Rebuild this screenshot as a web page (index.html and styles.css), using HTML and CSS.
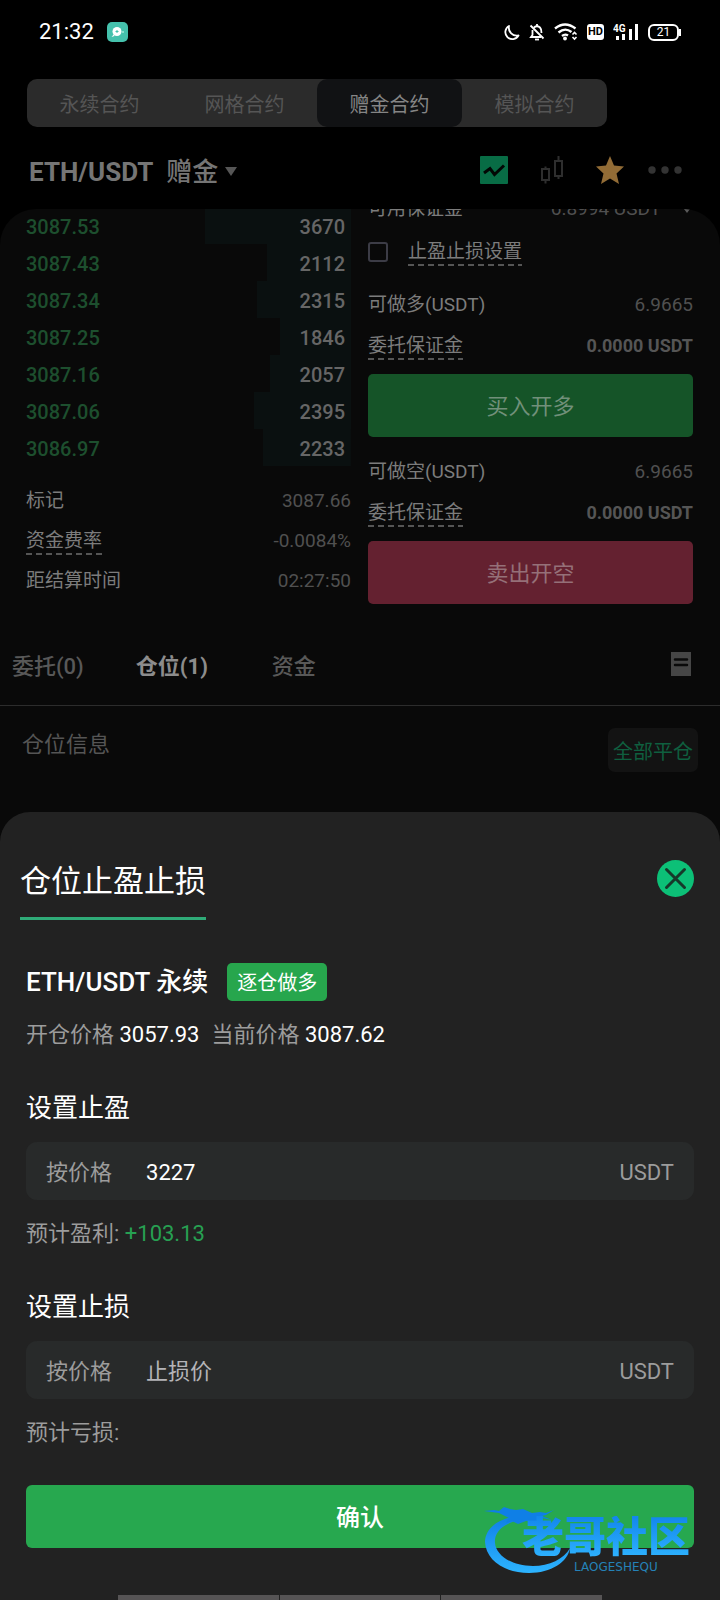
FILE: index.html
```html
<!DOCTYPE html>
<html lang="zh-CN">
<head>
  <meta charset="UTF-8" />
  <meta name="viewport" content="width=device-width, initial-scale=1.0" />
  <title>ETH/USDT 赠金合约</title>
  <link rel="stylesheet" href="styles.css">
</head>
<body>
  <div class="status-bar">
    <span class="clock">21:32</span>
    <svg class="app-badge" width="21" height="20" viewBox="0 0 21 20">
      <rect width="21" height="20" rx="5" fill="#45c1ac"/>
      <circle cx="10" cy="9.5" r="4.5" fill="#fff"/>
      <path d="M7 12l-2.500 3 3-1z" fill="#fff"/>
      <circle cx="16" cy="10" r="1" fill="#a5e8da"/>
      <path d="M10 8v3M8.500 9.500h3" stroke="#45c1ac" stroke-width="1"/>
    </svg>
    <div class="status-icons">
      <svg width="16" height="18" viewBox="0 0 16 18" fill="none" stroke="#fff" stroke-width="1.800" stroke-linejoin="round">
        <path d="M5 3A7 7 0 1 0 14.500 12.500A8 8 0 0 1 5 3z"/>
      </svg>
      <svg width="16" height="18" viewBox="0 0 16 18" fill="none" stroke="#fff" stroke-width="1.800">
        <path d="M5 4.500Q8 2 11 4.500Q12.500 6 12.500 10M3.500 7V12L2 14H12M8 1v2M1.500 2.500L14.500 15.500"/>
        <path d="M6 16.500h4"/>
      </svg>
      <svg width="24" height="18" viewBox="0 0 24 18" fill="none" stroke="#fff" stroke-width="2.400">
        <path d="M1 5.500Q11 -2.500 21.500 5.500M4.500 9.500Q11 4 17.500 9"/>
        <path d="M8 13Q11 10.500 14 12.500"/>
        <circle cx="11" cy="15.500" r="1.900" fill="#fff" stroke="none"/>
        <path d="M18.500 11.500L20.500 9.500L22.500 11.500M18.500 14L20.500 16L22.500 14" stroke-width="1.600"/>
      </svg>
      <span class="hd">HD</span>
      <svg class="signal" width="26" height="18" viewBox="0 0 26 18" fill="#fff">
        <text x="0" y="9" font-size="10" font-weight="700">4G</text>
        <path d="M3 13h3v4H3zM9 11h3v6H9zM16 6h3v11h-3zM22 1h3v16h-3z"/>
      </svg>
      <span class="battery">21</span>
    </div>
  </div>

  <nav class="segment">
    <button>永续合约</button>
    <button>网格合约</button>
    <button class="active">赠金合约</button>
    <button>模拟合约</button>
  </nav>

  <header class="pair-bar">
    <button class="pair-select">
      <span class="pair-name">ETH/USDT</span>
      <span>赠金</span>
      <svg width="12" height="9" viewBox="0 0 12 9"><path d="M0 0h12L6 9z" fill="#565656"/></svg>
    </button>
    <div class="pair-tools">
      <button aria-label="走势">
        <svg width="28" height="28" viewBox="0 0 28 28">
          <rect width="28" height="28" rx="1" fill="#086c45"/>
          <path d="M4 17L10 12.500L14.500 18.500L24 9.500" fill="none" stroke="#020604" stroke-width="3"/>
        </svg>
      </button>
      <button aria-label="K线">
        <svg width="24" height="28" viewBox="0 0 24 28" fill="none" stroke="#2e2e2e" stroke-width="2">
          <path d="M2 13h7v11H2zM5.500 10.500V13M5.500 24v3.500M15 5h7v15h-7zM18.500 0v5M18.500 20v3"/>
        </svg>
      </button>
      <button aria-label="收藏">
        <svg width="28" height="28" viewBox="0 0 28 28">
          <path d="M14 0L18 9.500L28 10.500L20.500 17.500L23 28L14 22.500L5 28L7.500 17.500L0 10.500L10 9.500z" fill="#926c36"/>
        </svg>
      </button>
      <button aria-label="更多">
        <svg width="34" height="28" viewBox="0 0 34 28" fill="#333">
          <circle cx="4" cy="14" r="3.700"/><circle cx="17" cy="14" r="3.700"/><circle cx="30" cy="14" r="3.700"/>
        </svg>
      </button>
    </div>
  </header>

  <main class="panel">
    <div class="trade">
      <section class="market">
        <div class="book">
          <div class="book-row" style="background-size: 45% 100%"><span>3087.53</span><span>3670</span></div>
          <div class="book-row" style="background-size: 26% 100%"><span>3087.43</span><span>2112</span></div>
          <div class="book-row" style="background-size: 29% 100%"><span>3087.34</span><span>2315</span></div>
          <div class="book-row" style="background-size: 22% 100%"><span>3087.25</span><span>1846</span></div>
          <div class="book-row" style="background-size: 25% 100%"><span>3087.16</span><span>2057</span></div>
          <div class="book-row" style="background-size: 30% 100%"><span>3087.06</span><span>2395</span></div>
          <div class="book-row" style="background-size: 27% 100%"><span>3086.97</span><span>2233</span></div>
        </div>
        <div class="row"><span>标记</span><span class="value">3087.66</span></div>
        <div class="row"><span class="hint">资金费率</span><span class="value">-0.0084%</span></div>
        <div class="row"><span>距结算时间</span><span class="value">02:27:50</span></div>
      </section>

      <section class="order">
        <div class="row available">
          <span>可用保证金</span>
          <span class="value">6.8994 USDT
            <svg width="12" height="8" viewBox="0 0 12 8"><path d="M0 0h12L6 8z" fill="#5a5a5a"/></svg>
          </span>
        </div>
        <label class="tpsl">
          <input type="checkbox">
          <span class="hint">止盈止损设置</span>
        </label>
        <div class="row"><span>可做多(USDT)</span><span class="value">6.9665</span></div>
        <div class="row margin"><span class="hint">委托保证金</span><strong>0.0000 USDT</strong></div>
        <button class="trade-btn buy">买入开多</button>
        <div class="row"><span>可做空(USDT)</span><span class="value">6.9665</span></div>
        <div class="row margin"><span class="hint">委托保证金</span><strong>0.0000 USDT</strong></div>
        <button class="trade-btn sell">卖出开空</button>
      </section>
    </div>

    <nav class="tabs">
      <button>委托(0)</button>
      <button class="active">仓位(1)</button>
      <button>资金</button>
      <button class="history" aria-label="历史">
        <svg width="20" height="24" viewBox="0 0 20 24">
          <rect width="20" height="24" fill="#464646"/>
          <path d="M4 7.500h12M4 13h12" stroke="#0a0a0a" stroke-width="2.500" stroke-linecap="round"/>
        </svg>
      </button>
    </nav>

    <div class="positions">
      <span>仓位信息</span>
      <button class="close-all">全部平仓</button>
    </div>
  </main>

  <form class="sheet">
    <div class="sheet-head">
      <h2>仓位止盈止损</h2>
      <button type="button" class="close" aria-label="关闭">
        <svg width="37" height="37" viewBox="0 0 37 37">
          <circle cx="18.500" cy="18.500" r="18.500" fill="#0cc077"/>
          <path d="M9.500 9.500L27.500 27.500M27.500 9.500L9.500 27.500" stroke="#16392a" stroke-width="3" stroke-linecap="round"/>
        </svg>
      </button>
    </div>

    <div class="sheet-body">
      <div class="position-name">
        <h3>ETH/USDT 永续</h3>
        <span class="side">逐仓做多</span>
      </div>
      <div class="prices">
        <span>开仓价格 <b>3057.93</b></span>
        <span>当前价格 <b>3087.62</b></span>
      </div>

      <h4>设置止盈</h4>
      <div class="field">
        <label for="takeProfit">按价格</label>
        <input id="takeProfit" type="text" inputmode="decimal" value="3227">
        <span>USDT</span>
      </div>
      <p class="estimate">预计盈利: <span class="profit">+103.13</span></p>

      <h4>设置止损</h4>
      <div class="field">
        <label for="stopLoss">按价格</label>
        <input id="stopLoss" type="text" inputmode="decimal" placeholder="止损价">
        <span>USDT</span>
      </div>
      <p class="estimate">预计亏损:</p>

      <button type="submit" class="confirm">确认</button>
    </div>

    <div class="home-bar"><i></i><i></i><i></i></div>

    <div class="watermark">
      <svg width="90" height="70" viewBox="0 0 90 70">
        <defs>
          <linearGradient id="wave" x1="0" y1="0" x2="0" y2="1">
            <stop offset="0" stop-color="#0f7fe6"/>
            <stop offset="1" stop-color="#2db4ff"/>
          </linearGradient>
        </defs>
        <path fill="url(#wave)" d="M34 12C14 15 3 26 3 38C4 56 22 69 47 69C69 69 86 58 88 44C82 55 67 62 51 62C29 62 14 51 13 39C12 29 20 20 37 16z"/>
        <path fill="#0f7fe6" d="M2 7L12 6L17 7L22 3L28 5L34 6L41 5L50 9L58 8L64 9L72 6L64 11L60 12L70 16L60 14L54 17L44 17L36 20L30 17L24 19L27 14L17 9z"/>
      </svg>
      <div class="watermark-text">
        <span class="watermark-name">老哥社区</span>
        <span class="watermark-latin">LAOGESHEQU</span>
      </div>
    </div>
  </form>
</body>
</html>
```

FILE: styles.css
```css
* {
  box-sizing: border-box;
}

body {
  margin: 0;
  min-height: 100vh;
  background: #000;
  color: #7c7c7c;
  font-family: Roboto, "Noto Sans CJK SC", sans-serif;
  font-size: 19px;
  line-height: 28px;
  overflow-x: hidden;
}

button,
input {
  font: inherit;
  color: inherit;
  background: none;
  border: none;
  padding: 0;
  margin: 0;
}

button {
  cursor: pointer;
}

svg {
  display: block;
}

h2,
h3,
h4,
p {
  margin: 0;
  font-weight: 400;
}

/* status bar */
.status-bar {
  display: flex;
  align-items: center;
  height: 64px;
  padding: 0 41px 0 39px;
  color: #fff;
}

.clock {
  font-size: 22px;
}

.app-badge {
  margin-left: 13px;
}

.status-icons {
  display: flex;
  align-items: center;
  gap: 9px;
  margin-left: auto;
}

.hd {
  width: 17px;
  border-radius: 3px;
  background: #fff;
  color: #000;
  font-size: 11px;
  font-weight: 700;
  line-height: 16px;
  text-align: center;
}

.battery {
  position: relative;
  width: 31px;
  border: 2px solid #fff;
  border-radius: 6px;
  font-size: 12px;
  line-height: 13px;
  text-align: center;
}

.battery::after {
  content: "";
  position: absolute;
  top: 3px;
  right: -4px;
  width: 2px;
  height: 7px;
  background: #fff;
}

/* contract switch */
.segment {
  display: flex;
  margin: 15px 113px 0 27px;
  border-radius: 10px;
  background: #2b2b2b;
}

.segment button {
  flex: 1;
  height: 48px;
  padding-top: 3px;
  border-radius: 10px;
  color: #555;
  font-size: 20px;
}

.segment .active {
  background: #111214;
  color: #858585;
}

/* pair */
.pair-bar {
  display: flex;
  align-items: center;
  justify-content: space-between;
  height: 82px;
  padding: 4px 38px 0 29px;
}

.pair-select {
  display: flex;
  align-items: center;
  padding-top: 3px;
  font-size: 26px;
  font-weight: 500;
  color: #757575;
}

.pair-name {
  margin-right: 13px;
  font-weight: 700;
}

.pair-select svg {
  margin-left: 7px;
}

.pair-tools {
  display: flex;
  align-items: center;
  gap: 28px;
}

.pair-tools button:nth-child(2) {
  margin: 0 4px;
}

.pair-tools button:last-child {
  margin-left: -4px;
}

/* trade panel */
.panel {
  overflow: hidden;
  border-radius: 36px 36px 0 0;
  background: #090909;
}

/* scrolled a little, so the first row is cut by the panel edge */
.trade {
  display: grid;
  grid-template-columns: 324px 1fr;
  grid-template-columns: 1fr 1fr;
  gap: 17px;
  margin-top: -22px;
  padding: 0 27px 0 26px;
}

.book {
  margin: 20px 0 14px;
}

.book-row {
  display: flex;
  align-items: center;
  justify-content: space-between;
  height: 37px;
  padding: 2px 6px 0 0;
  background: linear-gradient(#0a1010, #0a1010) no-repeat right;
  color: #666;
  font-size: 20px;
  font-weight: 500;
}

.book-row span:first-child {
  color: #1d4f2e;
}

.row {
  display: flex;
  align-items: center;
  justify-content: space-between;
  height: 40px;
  padding-top: 2px;
}

.row .value {
  color: #505050;
}

.row strong {
  color: #555;
  font-size: 18px;
}

.hint {
  background: repeating-linear-gradient(90deg, #555 0 6px, transparent 6px 10px) no-repeat bottom / 100% 2px;
}

.available {
  height: 38px;
  padding-top: 5px;
}

.available .value {
  display: flex;
  align-items: center;
  gap: 20px;
}

.margin {
  height: 42px;
}

.tpsl {
  display: flex;
  align-items: center;
  gap: 20px;
  height: 54px;
  margin-bottom: 5px;
}

.tpsl input {
  appearance: none;
  width: 20px;
  height: 20px;
  border: 2px solid #3c3c46;
  border-radius: 3px;
}

.trade-btn {
  width: 100%;
  height: 63px;
  margin-top: 8px;
  padding-top: 2px;
  border-radius: 5px;
  font-size: 22px;
}

.buy {
  margin-bottom: 14px;
  background: #155428;
  color: #71907a;
}

.sell {
  background: #642130;
  color: #957078;
}

/* tabs */
.tabs {
  display: flex;
  align-items: center;
  height: 80px;
  margin-top: 22px;
  padding: 2px 29px 0 12px;
  border-bottom: 1px solid #2c2c2c;
  color: #585858;
  font-size: 22px;
  font-weight: 500;
}

.tabs button {
  margin-right: 52px;
}

.tabs .active {
  margin-right: 64px;
  color: #8c8c8c;
  font-weight: 700;
}

.tabs .history {
  margin: 0 0 6px auto;
}

.positions {
  display: flex;
  align-items: flex-start;
  justify-content: space-between;
  padding: 22px 22px 70px;
  color: #555;
  font-size: 22px;
  line-height: 34px;
}

.close-all {
  height: 44px;
  padding: 3px 5px 0;
  border-radius: 7px;
  background: #131313;
  color: #0f5f3f;
  font-size: 20px;
}

/* bottom sheet */
.sheet {
  position: relative;
  margin-top: -30px;
  padding-top: 40px;
  border-radius: 30px 30px 0 0;
  background: #222;
  color: #9c9c9c;
  font-size: 22px;
}

.sheet-head {
  display: flex;
  align-items: flex-start;
  justify-content: space-between;
  padding: 0 26px 0 20px;
}

.sheet-head h2 {
  padding: 2px 0 7px;
  border-bottom: 3px solid #2fab78;
  color: #fff;
  font-size: 31px;
  line-height: 56px;
}

.close {
  margin-top: 8px;
}

.sheet-body {
  padding: 43px 26px 47px;
}

.position-name {
  display: flex;
  align-items: center;
  gap: 19px;
}

.position-name h3 {
  color: #fff;
  font-size: 26px;
  font-weight: 500;
  line-height: 38px;
}

.side {
  padding: 2px 10px 0;
  border-radius: 5px;
  background: #27a64d;
  color: #fff;
  font-size: 20px;
  line-height: 36px;
}

.prices {
  display: flex;
  gap: 12px;
  margin-top: 17px;
  line-height: 33px;
}

.prices b {
  color: #fff;
  font-weight: 400;
}

.sheet h4 {
  margin: 38px 0 15px;
  color: #fff;
  font-size: 26px;
  line-height: 38px;
}

.field {
  display: flex;
  align-items: center;
  height: 58px;
  padding: 3px 20px 0;
  border-radius: 11px;
  background: #282a2a;
}

.field input {
  flex: 1;
  min-width: 0;
  margin-left: 34px;
  color: #fff;
  outline: none;
}

.field input::placeholder {
  color: #b4b4b8;
  opacity: 1;
}

.estimate {
  margin-top: 17px;
  line-height: 33px;
}

.profit {
  color: #27a052;
}

.confirm {
  width: 100%;
  height: 63px;
  margin-top: 36px;
  padding-top: 3px;
  border-radius: 6px;
  background: #27a84f;
  color: #fff;
  font-size: 24px;
  font-weight: 500;
}

.home-bar {
  display: flex;
  gap: 1px;
  height: 5px;
  margin: 0 118px;
}

.home-bar i {
  flex: 1;
  background: #565455;
}

.watermark {
  position: absolute;
  right: 18px;
  bottom: 26px;
  display: flex;
  width: 220px;
  pointer-events: none;
}

.watermark svg {
  flex: none;
}

.watermark-text {
  display: flex;
  flex-direction: column;
  flex: 1;
  margin-left: -50px;
  padding-top: 12px;
}

.watermark-name {
  background: linear-gradient(#1286ec, #2fb4ff);
  background-clip: text;
  -webkit-background-clip: text;
  color: transparent;
  font-size: 42px;
  font-weight: 900;
  line-height: 44px;
  white-space: nowrap;
}

.watermark-latin {
  margin-left: 52px;
  color: #2582b8;
  font-family: "DejaVu Sans", sans-serif;
  font-size: 12px;
  line-height: 14px;
}
```
